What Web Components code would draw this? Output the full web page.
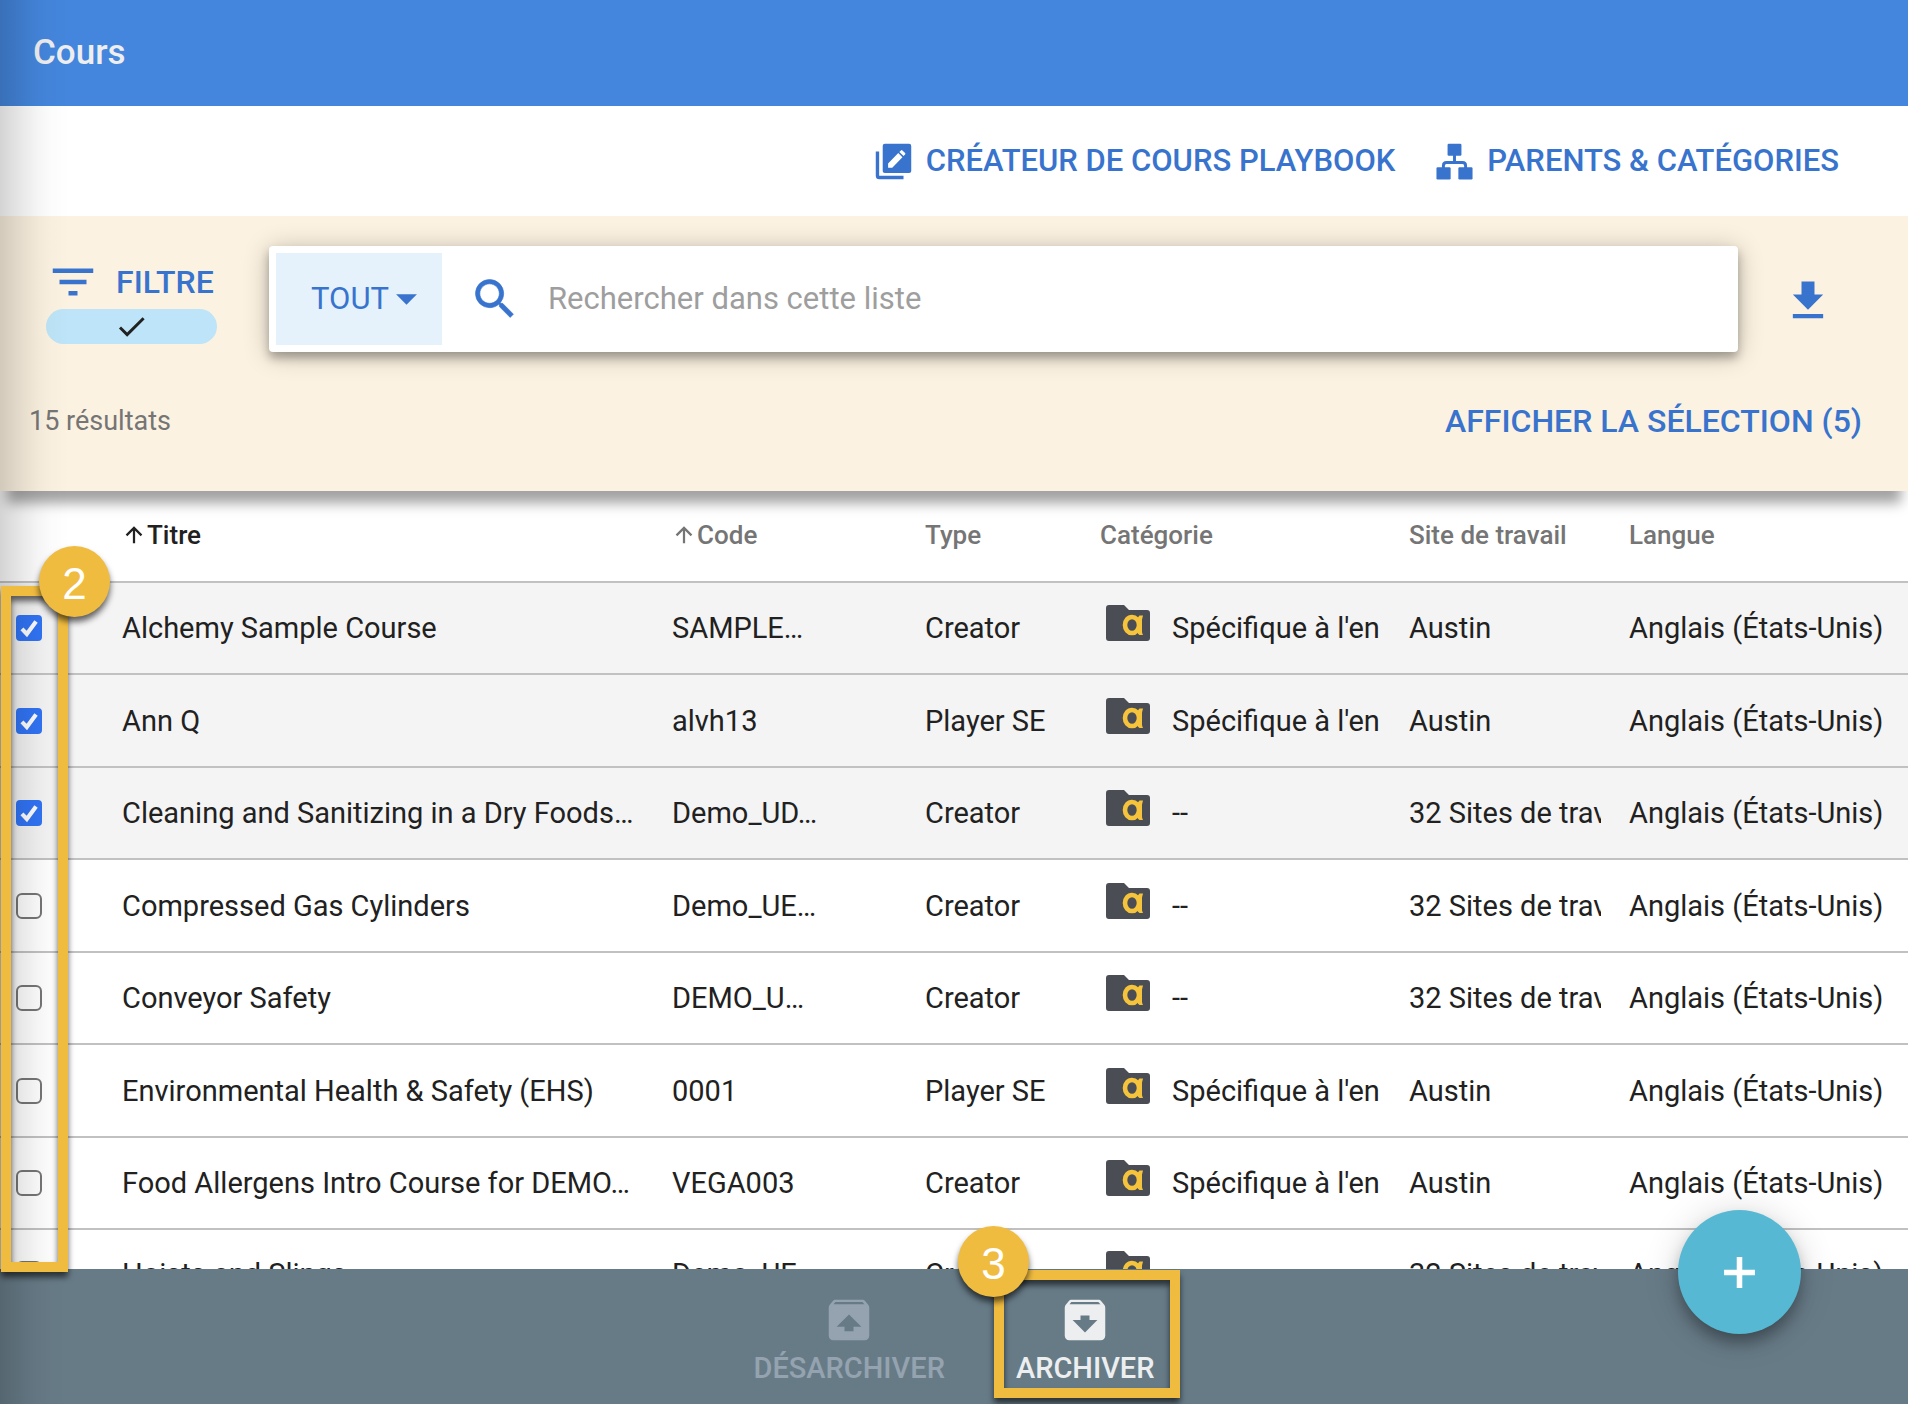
<!DOCTYPE html>
<html lang="fr">
<head>
<meta charset="utf-8">
<title>Cours</title>
<style>
  html, body { margin: 0; height: 100%; }
  body { font-family: Roboto, "Liberation Sans", sans-serif; color: #212121; background: #fff; overflow: hidden; }
</style>
</head>
<body>
<course-page></course-page>

<script>
const ICONS = {
  filter: '<path d="M10 18h4v-2h-4v2zM3 6v2h18V6H3zm3 7h12v-2H6v2z"/>',
  search: '<path d="M15.5 14h-.79l-.28-.27A6.471 6.471 0 0 0 16 9.5 6.5 6.5 0 1 0 9.5 16c1.61 0 3.09-.59 4.23-1.57l.27.28v.79l5 4.99L20.49 19l-4.99-5zm-6 0C7.01 14 5 11.99 5 9.5S7.01 5 9.5 5 14 7.01 14 9.5 11.99 14 9.5 14z" stroke="currentColor" stroke-width=".3"/>',
  check: '<path d="M9 16.17L4.83 12l-1.42 1.41L9 19 21 7l-1.41-1.41z"/>',
  download: '<path d="M19 9h-4V3H9v6H5l7 7 7-7zM5 18v2h14v-2H5z"/>',
  archive: '<path d="M20.54 5.23l-1.39-1.68C18.88 3.21 18.47 3 18 3H6c-.47 0-.88.21-1.16.55L3.46 5.23C3.17 5.57 3 6.02 3 6.5V19c0 1.1.9 2 2 2h14c1.1 0 2-.9 2-2V6.5c0-.48-.17-.93-.46-1.27zM12 17.5L6.5 12H10v-2h4v2h3.5L12 17.5zM5.12 5l.81-1h12l.94 1H5.12z"/>',
  unarchive: '<path d="M20.54 5.23l-1.39-1.68C18.88 3.21 18.47 3 18 3H6c-.47 0-.88.21-1.16.55L3.46 5.23C3.17 5.57 3 6.02 3 6.5V19c0 1.1.9 2 2 2h14c1.1 0 2-.9 2-2V6.5c0-.48-.17-.93-.46-1.27zM12 9.5l5.5 5.5H14v2h-4v-2H6.5L12 9.5zM5.12 5l.82-1h12l.93 1H5.12z"/>',
  caret: '<path d="M2 7h20L12 17z"/>',
  plus: '<path d="M10.2 2h3.6v8.2H22v3.6h-8.2V22h-3.6v-8.2H2v-3.6h8.2z"/>',
  arrow: '<path d="M12 22V3.500M3 12.500L12 3.500l9 9" fill="none" stroke="currentColor" stroke-width="2.700"/>',
  tick: '<path d="M5.500 12.800l4.500 4.700L18.500 6" fill="none" stroke="currentColor" stroke-width="3.800"/>',
  playbook: '<path d="M1.600 5.500V21.200q0 1.200 1.200 1.200H18.500" fill="none" stroke="currentColor" stroke-width="2.200"/><rect x="5" y=".5" width="18.500" height="19" rx="1.400"/><path d="M8.500 13.300v2.700h2.700l6.600-6.800-2.700-2.700zM15.800 5.800l2.700 2.700 1-1q.5-.5 0-1l-1.700-1.700q-.5-.5-1 0z" fill="#fff"/>',
  sitemap: '<rect x="7.500" y=".5" width="9" height="7.700" rx=".8"/><path d="M12 7v5.700M4.800 17v-2.300q0-2 2-2h10.400q2 0 2 2V17" fill="none" stroke="currentColor" stroke-width="1.900"/><rect x=".3" y="15.800" width="9.200" height="7.900" rx=".8"/><rect x="14.500" y="15.800" width="9.200" height="7.900" rx=".8"/>'
};

class BaseElement extends HTMLElement {
  paint(css, html) {
    const root = this.attachShadow({ mode: 'open' });
    root.innerHTML = `<style>
      *, *::before { box-sizing: border-box; }
      button, select, input { font: inherit; color: inherit; border: 0; background: none; padding: 0; margin: 0; }
      ${css}</style>${html}`;
  }
}

class AppIcon extends BaseElement {
  connectedCallback() {
    const size = this.getAttribute('size');
    this.paint(`:host { display: block; flex: none; width: ${size}px; height: ${size}px; } svg { display: block; }`,
      `<svg viewBox="0 0 24 24" width="${size}" height="${size}" fill="currentColor" aria-hidden="true">${ICONS[this.getAttribute('name')]}</svg>`);
  }
}
customElements.define('app-icon', AppIcon);

/* Folder with the round "a" brand mark */
class FolderIcon extends BaseElement {
  connectedCallback() {
    this.paint(`:host { display: block; flex: none; width: 44px; height: 36px; } svg { display: block; }`,
      `<svg viewBox="0 0 44 36" width="44" height="36" aria-hidden="true">
        <path d="M3 0h15l5 5h18q3 0 3 3v25q0 3-3 3H3q-3 0-3-3V3q0-3 3-3z" fill="#4a4e54"/>
        <ellipse cx="26" cy="20" rx="7" ry="8" fill="none" stroke="#f6c43c" stroke-width="4.600"/>
        <path d="M33.500 10.500h3.500l-1 4v12.500q.2 1.500 1 3h-3.500q-2-1-2-3V14q.5-2.500 2-3.500z" fill="#f6c43c"/>
      </svg>`);
  }
}
customElements.define('folder-icon', FolderIcon);

/* Numbered yellow callout: a frame with a round badge on its corner */
class StepCallout extends BaseElement {
  connectedCallback() {
    this.paint(`
      :host { display: block; position: absolute; z-index: 3; pointer-events: none; }
      .frame { position: absolute; inset: 0; border: 10px solid #f0bc40; filter: drop-shadow(0 5px 3px rgba(0,0,0,.62)); }
      .badge { position: absolute; left: var(--badge-left); top: var(--badge-top); width: 71px; height: 71px; border-radius: 50%;
        display: flex; align-items: center; justify-content: center; padding-top: 4px; background: #f0bc40; color: #fff;
        font: 44px "Liberation Sans", sans-serif; box-shadow: 0 5px 6px rgba(0,0,0,.62); }`,
      `<div class="frame"></div><div class="badge"><slot></slot></div>`);
  }
}
customElements.define('step-callout', StepCallout);

class PageHeader extends BaseElement {
  connectedCallback() {
    this.paint(`
      :host { display: flex; align-items: center; flex: none; height: 106px; padding: 0 33px; background: #4486dd; color: #eee; }
      h1 { margin: 0; font-size: 35px; line-height: 42px; font-weight: 500; }`,
      `<h1><slot></slot></h1>`);
  }
}
customElements.define('page-header', PageHeader);

class PageLinks extends BaseElement {
  connectedCallback() {
    this.paint(`
      :host { display: flex; align-items: center; justify-content: flex-end; flex: none; gap: 41px; height: 110px; padding-right: 69px; color: #3874cd; }
      a { display: flex; align-items: center; gap: 14px; color: inherit; text-decoration: none; font-size: 31px; line-height: 36px; font-weight: 500; white-space: nowrap; }`,
      `<a href="#playbook"><app-icon name="playbook" size="37"></app-icon>CRÉATEUR DE COURS PLAYBOOK</a>
       <a href="#categories"><app-icon name="sitemap" size="37"></app-icon>PARENTS &amp; CATÉGORIES</a>`);
  }
}
customElements.define('page-links', PageLinks);

class SearchBox extends BaseElement {
  connectedCallback() {
    this.paint(`
      :host { display: flex; align-items: stretch; flex: 1; min-width: 0; height: 106px; padding: 7px; background: #fff; border-radius: 4px;
        box-shadow: 0 6px 10px rgba(0,0,0,.28), 0 3px 26px rgba(0,0,0,.24); font-size: 31px; }
      .scope { display: grid; width: 166px; background: #e5f2fc; color: #3874cd; }
      .scope > * { grid-area: 1 / 1; }
      select { appearance: none; width: 100%; padding: 0 35px 2px; outline: 0; }
      .scope app-icon { align-self: center; justify-self: end; margin-right: 23px; pointer-events: none; }
      label { display: flex; flex: 1; align-items: center; gap: 27px; padding-left: 27px; color: #3874cd; }
      input { flex: 1; min-width: 0; padding-bottom: 2px; color: #212121; outline: 0; }
      input::placeholder { color: #9e9e9e; opacity: 1; }`,
      `<div class="scope"><select aria-label="Portée"><option>TOUT</option></select><app-icon name="caret" size="25"></app-icon></div>
       <label><app-icon name="search" size="52"></app-icon><input type="text" aria-label="Rechercher" placeholder="Rechercher dans cette liste"></label>`);
  }
}
customElements.define('search-box', SearchBox);

class FilterBar extends BaseElement {
  connectedCallback() {
    this.paint(`
      :host { display: flex; flex-direction: column; flex: none; gap: 49px; padding: 30px 0 50px; background: #fcf2e1; position: relative; z-index: 1;
        box-shadow: 0 19px 12px -7px rgba(0,0,0,.37); }
      .tools { display: flex; align-items: center; gap: 52px; padding: 0 74px 0 46px; color: #3874cd; }
      .filter { width: 171px; color: inherit; cursor: pointer; }
      .filter .name { display: flex; align-items: center; gap: 16px; font-size: 32px; font-weight: 500; }
      .pill { display: flex; justify-content: center; height: 35px; border-radius: 18px; background: #bde4f8; color: #212121; }
      .download { margin-left: -8px; padding-top: 4px; cursor: pointer; }
      .status { display: flex; align-items: center; justify-content: space-between; height: 40px; padding: 0 46px 0 29px; line-height: 36px; }
      .count { font-size: 27px; color: #757575; }
      .selection { font-size: 32px; font-weight: 500; color: #3874cd; }`,
      `<div class="tools">
         <button class="filter"><span class="name"><app-icon name="filter" size="54"></app-icon>FILTRE</span><span class="pill"><app-icon name="check" size="35"></app-icon></span></button>
         <search-box></search-box>
         <button class="download" aria-label="Télécharger"><app-icon name="download" size="52"></app-icon></button>
       </div>
       <div class="status"><span class="count">15 résultats</span><button class="selection">AFFICHER LA SÉLECTION (5)</button></div>`);
  }
}
customElements.define('filter-bar', FilterBar);

class CheckBox extends BaseElement {
  connectedCallback() {
    this.paint(`
      :host { display: grid; width: 26px; height: 26px; }
      input, app-icon { grid-area: 1 / 1; }
      input { appearance: none; width: 26px; height: 26px; border: 2px solid #767676; border-radius: 6px; background: #fff; }
      input:checked { border-color: #3174f6; background: #3174f6; border-radius: 4px; }
      app-icon { place-self: center; color: #fff; pointer-events: none; }
      input:not(:checked) + app-icon { visibility: hidden; }`,
      `<input type="checkbox" aria-label="${this.getAttribute('label')}" ${this.hasAttribute('checked') ? 'checked' : ''}><app-icon name="tick" size="26"></app-icon>`);
  }
}
customElements.define('check-box', CheckBox);

class CourseTable extends BaseElement {
  connectedCallback() {
    const own = "Spécifique à l'en", many = '32 Sites de travail', lang = 'Anglais (États-Unis)';
    const rows = [
      ['Alchemy Sample Course', 'SAMPLE…', 'Creator', own, 'Austin', 1],
      ['Ann Q', 'alvh13', 'Player SE', own, 'Austin', 1],
      ['Cleaning and Sanitizing in a Dry Foods…', 'Demo_UD…', 'Creator', '--', many, 1],
      ['Compressed Gas Cylinders', 'Demo_UE…', 'Creator', '--', many, 0],
      ['Conveyor Safety', 'DEMO_U…', 'Creator', '--', many, 0],
      ['Environmental Health &amp; Safety (EHS)', '0001', 'Player SE', own, 'Austin', 0],
      ['Food Allergens Intro Course for DEMO…', 'VEGA003', 'Creator', own, 'Austin', 0],
      ['Hoists and Slings', 'Demo_UE…', 'Creator', '--', many, 0]
    ];
    this.paint(`
      :host { display: block; flex: 1; min-height: 0; position: relative; }
      .view { height: 100%; overflow: hidden; }
      table { width: 100%; table-layout: fixed; border-collapse: separate; border-spacing: 0; }
      .c-check { width: 122px; } .c-code { width: 253px; } .c-type { width: 175px; }
      .c-cat { width: 309px; } .c-site { width: 220px; } .c-lang { width: 279px; }
      th, td { padding: 0; text-align: left; border-bottom: 2px solid #c1c1c1; white-space: nowrap; }
      th { height: 92px; padding-bottom: 2px; font-size: 26px; font-weight: 500; color: #757575; }
      th.sorted { color: #212121; }
      th button { display: flex; align-items: center; gap: 3px; padding-left: 2px; }
      td { height: 92px; font-size: 29px; overflow: hidden; }
      tr:nth-child(even):not(:last-child) td { height: 93px; }
      tr:last-child td { height: 90px; }
      tr.on td { background: #f4f4f4; }
      td:first-child { padding-left: 16px; }
      .cat { display: flex; align-items: center; gap: 22px; padding-left: 6px; }
      .cat folder-icon { margin-bottom: 10px; }
      .clip { margin-right: 28px; overflow: hidden; }`,
      `<div class="view"><table>
        <colgroup><col class="c-check"><col><col class="c-code"><col class="c-type"><col class="c-cat"><col class="c-site"><col class="c-lang"></colgroup>
        <thead><tr><th></th><th class="sorted"><button><app-icon name="arrow" size="20"></app-icon>Titre</button></th><th><button><app-icon name="arrow" size="20"></app-icon>Code</button></th><th>Type</th><th>Catégorie</th><th>Site de travail</th><th>Langue</th></tr></thead>
        <tbody>${rows.map(([title, code, type, cat, site, on]) => `<tr class="${on ? 'on' : ''}">
          <td><check-box label="${title}" ${on ? 'checked' : ''}></check-box></td><td>${title}</td><td>${code}</td><td>${type}</td>
          <td><div class="cat"><folder-icon></folder-icon><span>${cat}</span></div></td><td><div class="clip">${site}</div></td><td>${lang}</td></tr>`).join('')}</tbody>
      </table></div><slot></slot>`);
  }
}
customElements.define('course-table', CourseTable);

class ActionButton extends BaseElement {
  connectedCallback() {
    this.paint(`
      :host { display: block; position: relative; color: #eceef0; }
      :host([disabled]) { color: #94a3af; }
      button { display: flex; flex-direction: column; align-items: center; font-size: 29px; line-height: 36px; font-weight: 500; }
      app-icon { margin-bottom: 3px; }`,
      `<button ${this.hasAttribute('disabled') ? 'disabled' : ''}><app-icon name="${this.getAttribute('icon')}" size="54"></app-icon><slot></slot></button><slot name="callout"></slot>`);
  }
}
customElements.define('action-button', ActionButton);

class ActionBar extends BaseElement {
  connectedCallback() {
    this.paint(`
      :host { display: flex; justify-content: center; align-items: flex-start; gap: 71px; flex: none; height: 135px; padding-top: 24px; background: #677b87; position: relative; z-index: 1; }
      :host { box-sizing: border-box; }
      .add { position: absolute; right: 107px; top: -59px; width: 123px; height: 124px; border-radius: 50%; display: grid; place-items: center;
        background: #56b8d2; color: #fff; box-shadow: 0 10px 16px -2px rgba(0,0,0,.34), 0 3px 36px rgba(0,0,0,.16); }`,
      `<slot></slot><button class="add" aria-label="Ajouter"><app-icon name="plus" size="37"></app-icon></button>`);
  }
}
customElements.define('action-bar', ActionBar);

class CoursePage extends BaseElement {
  connectedCallback() {
    this.paint(`
      :host { display: flex; flex-direction: column; height: 100vh; position: relative; overflow: hidden; }
      .edge { position: absolute; z-index: 2; left: 0; top: 0; bottom: 0; width: 70px; pointer-events: none;
        background: linear-gradient(90deg, rgba(0,0,0,.17), rgba(0,0,0,.125) 12px, rgba(0,0,0,.08) 25px, rgba(0,0,0,.04) 38px, rgba(0,0,0,.015) 50px, transparent); }
      .boxes { left: 1px; top: 95px; width: 67px; bottom: -3px; --badge-left: 28px; --badge-top: -50px; }
      .archive { left: -22px; right: -25px; top: -23px; height: 128px; --badge-left: -36px; --badge-top: -44px; }
      .boxes { --badge-left: 38px; --badge-top: -40px; }
      course-table, action-bar { z-index: auto; }`,
      `<page-header>Cours</page-header>
       <page-links></page-links>
       <filter-bar></filter-bar>
       <course-table><step-callout class="boxes">2</step-callout></course-table>
       <action-bar>
         <action-button icon="unarchive" disabled>DÉSARCHIVER</action-button>
         <action-button icon="archive">ARCHIVER<step-callout slot="callout" class="archive">3</step-callout></action-button>
       </action-bar>
       <div class="edge"></div>`);
  }
}
customElements.define('course-page', CoursePage);
</script>
</body>
</html>
